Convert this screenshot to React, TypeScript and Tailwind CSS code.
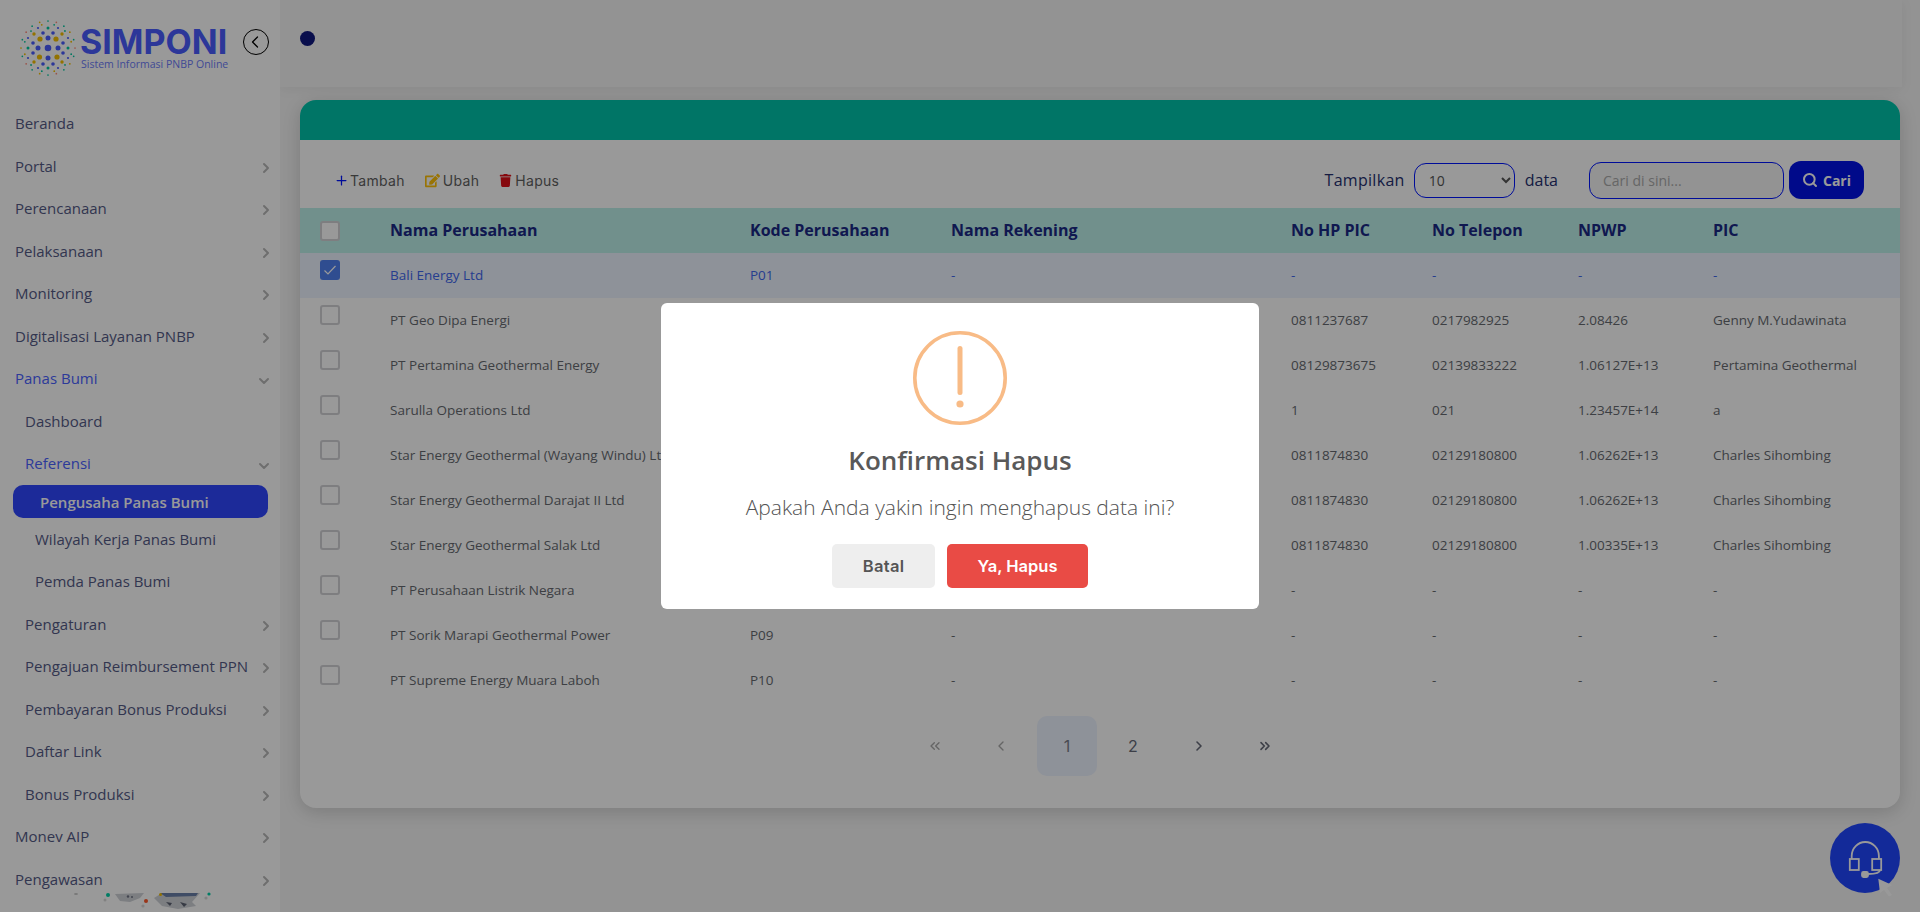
import React from "react";
import { ChevronDown, ChevronLeft, ChevronRight, ChevronsLeft, ChevronsRight, Plus, Search } from "lucide-react";
import { FaEdit, FaTrash } from "react-icons/fa";

type MenuItem = {
  label: string;
  indent?: number;
  arrow?: "right" | "down";
  active?: boolean;
  selected?: boolean;
};

const menu: MenuItem[] = [
  { label: "Beranda" },
  { label: "Portal", arrow: "right" },
  { label: "Perencanaan", arrow: "right" },
  { label: "Pelaksanaan", arrow: "right" },
  { label: "Monitoring", arrow: "right" },
  { label: "Digitalisasi Layanan PNBP", arrow: "right" },
  { label: "Panas Bumi", arrow: "down", active: true },
  { label: "Dashboard", indent: 1 },
  { label: "Referensi", indent: 1, arrow: "down", active: true },
  { label: "Pengusaha Panas Bumi", indent: 2, selected: true },
  { label: "Wilayah Kerja Panas Bumi", indent: 2 },
  { label: "Pemda Panas Bumi", indent: 2 },
  { label: "Pengaturan", indent: 1, arrow: "right" },
  { label: "Pengajuan Reimbursement PPN", indent: 1, arrow: "right" },
  { label: "Pembayaran Bonus Produksi", indent: 1, arrow: "right" },
  { label: "Daftar Link", indent: 1, arrow: "right" },
  { label: "Bonus Produksi", indent: 1, arrow: "right" },
  { label: "Monev AIP", arrow: "right" },
  { label: "Pengawasan", arrow: "right" },
];

const rows = [
  ["Bali Energy Ltd", "P01", "-", "-", "-", "-", "-"],
  ["PT Geo Dipa Energi", "P02", "-", "0811237687", "0217982925", "2.08426", "Genny M.Yudawinata"],
  ["PT Pertamina Geothermal Energy", "P03", "-", "08129873675", "02139833222", "1.06127E+13", "Pertamina Geothermal"],
  ["Sarulla Operations Ltd", "P04", "-", "1", "021", "1.23457E+14", "a"],
  ["Star Energy Geothermal (Wayang Windu) Ltd", "P05", "-", "0811874830", "02129180800", "1.06262E+13", "Charles Sihombing"],
  ["Star Energy Geothermal Darajat II Ltd", "P06", "-", "0811874830", "02129180800", "1.06262E+13", "Charles Sihombing"],
  ["Star Energy Geothermal Salak Ltd", "P07", "-", "0811874830", "02129180800", "1.00335E+13", "Charles Sihombing"],
  ["PT Perusahaan Listrik Negara", "P08", "-", "-", "-", "-", "-"],
  ["PT Sorik Marapi Geothermal Power", "P09", "-", "-", "-", "-", "-"],
  ["PT Supreme Energy Muara Laboh", "P10", "-", "-", "-", "-", "-"],
];

const headers = ["Nama Perusahaan", "Kode Perusahaan", "Nama Rekening", "No HP PIC", "No Telepon", "NPWP", "PIC"];

const gridCols = "grid grid-cols-[90px_360px_201px_340px_141px_146px_135px_187px]";

const ringDots = (count: number, radius: number, size: number, colors: string[], offset = 0) =>
  Array.from({ length: count }, (_, i) => {
    const a = (i / count) * Math.PI * 2 + offset;
    return (
      <circle
        key={`${radius}-${i}`}
        cx={28 + Math.cos(a) * radius}
        cy={28 + Math.sin(a) * radius}
        r={size}
        fill={colors[i % colors.length]}
      />
    );
  });

const BLUE = "#4a5cff";
const GOLD = "#f5c000";
const TEAL = "#00c8a0";
const RED = "#ff8a7a";

const Logo = () => (
  <svg width="56" height="56" viewBox="0 0 56 56" className="shrink-0">
    <circle cx="28" cy="28" r="3.3" fill={BLUE} />
    {[[0, -10], [-10, 0], [10, 0], [0, 10]].map(([x, y]) => (
      <circle key={`a${x}${y}`} cx={28 + x} cy={28 + y} r="2.5" fill={BLUE} />
    ))}
    {[[-8, -9], [8, -9], [-8.5, 9], [9, 9]].map(([x, y]) => (
      <circle key={`g${x}${y}`} cx={28 + x} cy={28 + y} r="2.6" fill={GOLD} />
    ))}
    {[[-5, -15], [5, -15], [-15, -5], [15, -5], [-15, 5], [15, 5], [-5, 16], [5, 16]].map(([x, y]) => (
      <circle key={`b${x}${y}`} cx={28 + x} cy={28 + y} r="1.8" fill={BLUE} />
    ))}
    {[[-14, -14], [14, -14], [-14, 14], [14, 14]].map(([x, y]) => (
      <circle key={`h${x}${y}`} cx={28 + x} cy={28 + y} r="1.7" fill={GOLD} />
    ))}
    {[[0, -20], [-20, 0], [20, 0], [0, 20]].map(([x, y]) => (
      <circle key={`t${x}${y}`} cx={28 + x} cy={28 + y} r="1.5" fill={TEAL} />
    ))}
    {[[-10, -20], [10, -20], [-20, -10], [20, -10], [-20, 10], [20, 10], [-10, 20], [10, 20]].map(([x, y]) => (
      <circle key={`c${x}${y}`} cx={28 + x} cy={28 + y} r="1.1" fill={BLUE} />
    ))}
    {ringDots(12, 24, 0.9, [TEAL, TEAL, GOLD], 0.26)}
    {ringDots(20, 27, 0.85, [RED, TEAL, GOLD, TEAL], 0)}
  </svg>
);

const BottomArt = () => (
  <svg width="180" height="32" viewBox="0 0 180 32" className="absolute left-[50px] bottom-0">
    <ellipse cx="26" cy="14" rx="2" ry="1" fill="#c8c8c8" />
    <circle cx="58" cy="15" r="2" fill="#00d0a8" />
    <circle cx="55" cy="20" r="1.5" fill="#d8d8d8" />
    <path d="M65 14 L94 13 L90 18 L80 22 L70 21 Z" fill="#cfd2d8" />
    <circle cx="78" cy="16.5" r="1.2" fill="#6f7484" />
    <circle cx="82" cy="17" r="1" fill="#6f7484" />
    <circle cx="96" cy="21" r="2" fill="#ff5a2c" />
    <circle cx="93" cy="26" r="1.6" fill="#d8d8d8" />
    <path d="M104 18 L112 13 L150 13 L142 22 L146 26 L128 29 L112 26 Z" fill="#cfd2d8" />
    <path d="M110 13 L148 13 L146 16 L116 17 Z" fill="#6a7fa8" />
    <circle cx="110.5" cy="14.5" r="1.5" fill="#f5c000" />
    <path d="M116 22 L122 23 L120 26 Z M130 22 L137 24 L134 27 Z" fill="#5c6272" />
    <circle cx="156" cy="18" r="1.6" fill="#d8d8d8" />
    <circle cx="159" cy="14" r="1.6" fill="#00d0a8" />
  </svg>
);

const Sidebar = () => (
  <aside className="relative w-[280px] shrink-0 h-full bg-white overflow-hidden">
    <div className="h-[102px] flex items-start pt-5 pl-5">
      <Logo />
      <div className="ml-[4px] w-[150px] pt-[4px]">
        <div className="font-['Inter',sans-serif] font-bold text-[34px] leading-[36px] text-[#4a5cff] whitespace-nowrap">
          SIMPONI
        </div>
        <div className="-mt-[3px] ml-[1px] font-['Open_Sans',sans-serif] text-[10.5px] leading-[14px] text-[#6c7cf8] whitespace-nowrap">
          Sistem Informasi PNBP Online
        </div>
      </div>
      <button className="ml-[13px] mt-[9px] size-[26px] rounded-full border-[1.5px] border-black flex items-center justify-center">
        <ChevronLeft size={20} strokeWidth={1.5} className="text-black -ml-[2px]" />
      </button>
    </div>
    <nav className="font-['Open_Sans',sans-serif] text-[15px]">
      {menu.map((m) =>
        m.selected ? (
          <div key={m.label} className="h-[33px] ml-[13px] mr-3 rounded-[10px] bg-[#2f46ff] flex items-center pl-[27px] pt-[2px] text-white font-semibold">
            {m.label}
          </div>
        ) : (
          <div
            key={m.label}
            className={`h-[42.5px] flex items-center justify-between pr-[6px] ${
              m.indent === 2 ? "pl-[35px]" : m.indent === 1 ? "pl-[25px]" : "pl-[15px]"
            } ${m.active ? "text-[#4a62ff]" : "text-[#545a86]"}`}
          >
            <span className="whitespace-nowrap">{m.label}</span>
            {m.arrow === "right" && <ChevronRight size={16} strokeWidth={3} className="text-[#b8b8b8] mt-[4px]" />}
            {m.arrow === "down" && <ChevronDown size={16} strokeWidth={3} className="text-[#b8b8b8] mt-[6px] mr-[2px]" />}
          </div>
        )
      )}
    </nav>
    <BottomArt />
  </aside>
);

const Toolbar = () => (
  <div className="h-[68px] flex items-center justify-between pl-[34px] pr-[36px] pt-3">
    <div className="flex items-center font-['Inter',sans-serif] text-[14px] tracking-[0.3px] text-[#5f5f5f]">
      <Plus size={15} strokeWidth={2} className="text-[#0015ff] mr-[1px]" />
      <span>Tambah</span>
      <FaEdit size={15} className="text-[#ffc107] ml-5 mr-[3px]" />
      <span>Ubah</span>
      <FaTrash size={13} className="text-[#e01018] ml-5 mr-[3px]" />
      <span>Hapus</span>
    </div>
    <div className="flex items-center font-['Open_Sans',sans-serif]">
      <span className="text-[16px] font-medium tracking-[0.3px] text-[#25306f]">Tampilkan</span>
      <select className="ml-[9px] w-[101px] h-[35px] pl-[10px] pr-2 text-[14px] text-[#555] rounded-xl border border-[#0015ff] bg-transparent">
        <option>10</option>
        <option>25</option>
        <option>50</option>
      </select>
      <span className="ml-[10px] text-[16px] font-medium text-[#25306f]">data</span>
      <input
        placeholder="Cari di sini..."
        className="ml-[31px] w-[195px] h-[37px] px-[13px] text-[14px] rounded-xl border border-[#0015ff] bg-[#f5f5f5] placeholder:text-[#aaaaaa] outline-none"
      />
      <button className="ml-[5px] w-[75px] h-[38px] rounded-xl bg-[#0012e6] text-white text-[14px] font-bold flex items-center justify-center gap-[5px]">
        <Search size={16} strokeWidth={3} />
        Cari
      </button>
    </div>
  </div>
);

const Checkbox = ({ checked }: { checked?: boolean }) =>
  checked ? (
    <div className="size-5 rounded-[3px] bg-[#4f80f0] flex items-center justify-center">
      <svg width="14" height="14" viewBox="0 0 14 14" fill="none">
        <path d="M1.5 7.5 L5 11 L12.5 3" stroke="#fff" strokeWidth="1.2" />
      </svg>
    </div>
  ) : (
    <div className="size-5 rounded-[3px] border-2 border-[#d2d2d6] bg-white" />
  );

const DataTable = () => (
  <div className="font-['Open_Sans',sans-serif]">
    <div className={`${gridCols} h-[45px] bg-[#bcf0e9] items-center`}>
      <div className="pl-5">
        <Checkbox />
      </div>
      {headers.map((h) => (
        <div key={h} className="text-[16px] font-bold text-[#1a2885] whitespace-nowrap -mt-[2px]">
          {h}
        </div>
      ))}
    </div>
    {rows.map((r, idx) => (
      <div key={r[0]} className={`${gridCols} h-[45px] items-center text-[13.5px] ${idx === 0 ? "bg-[#edf3ff] text-[#4068ee]" : "text-[#666a70]"}`}>
        <div className="pl-5 self-start pt-[7px]">
          <Checkbox checked={idx === 0} />
        </div>
        {r.map((c, i) => (
          <div key={i} className="whitespace-nowrap -mt-[1px]">
            {c}
          </div>
        ))}
      </div>
    ))}
  </div>
);

const Pagination = () => (
  <div className="mt-[13px] flex justify-center gap-[6px] font-['Inter',sans-serif] text-[16px]">
    <div className="size-[60px] flex items-center justify-center text-[#a8a8a8]">
      <ChevronsLeft size={16} strokeWidth={2} />
    </div>
    <div className="size-[60px] flex items-center justify-center text-[#a8a8a8]">
      <ChevronLeft size={16} strokeWidth={2} />
    </div>
    <div className="size-[60px] rounded-[10px] bg-[#edf3ff] flex items-center justify-center text-[#7a7e8c]">1</div>
    <div className="size-[60px] flex items-center justify-center text-[#666a78]">2</div>
    <div className="size-[60px] flex items-center justify-center text-[#666a78]">
      <ChevronRight size={16} strokeWidth={2.4} />
    </div>
    <div className="size-[60px] flex items-center justify-center text-[#666a78]">
      <ChevronsRight size={16} strokeWidth={2.4} />
    </div>
  </div>
);

const HelpButton = () => (
  <button className="absolute left-[1830px] top-[823px] size-[70px] rounded-full bg-[#2046ff]">
    <svg width="70" height="70" viewBox="0 0 70 70" fill="none" className="overflow-visible" stroke="#fff" strokeWidth="1.8">
      <path d="M21.7 36 V33 a13.6 14 0 0 1 27.2 0 V36" />
      <rect x="19.8" y="36" width="9" height="11" />
      <rect x="42.2" y="36" width="9" height="11" />
      <path d="M50 47 C50 50 44 51 38 51" />
      <rect x="32" y="49" width="6" height="5" rx="1.5" fill="#fff" />
      <path d="M48.3 55.7 L62 62 L57 65 L62 72 L59 73.5 L54 67 L50 70 Z" fill="#fff" stroke="none" />
    </svg>
  </button>
);

const ConfirmModal = () => (
  <div className="absolute inset-0 bg-black/40 flex items-center justify-center">
    <div className="w-[598px] h-[306px] rounded-[6px] bg-white flex flex-col items-center pt-7 font-['Open_Sans',sans-serif]">
      <svg width="94" height="94" viewBox="0 0 94 94" fill="none" stroke="#f8bb86">
        <circle cx="47" cy="47" r="45.2" strokeWidth="3.6" />
        <path d="M47 17.5 V61.5" strokeWidth="5" strokeLinecap="round" />
        <circle cx="47" cy="73" r="3.6" fill="#f8bb86" stroke="none" />
      </svg>
      <h2 className="mt-[17px] text-[26px] leading-[36px] font-semibold text-[#595959]">Konfirmasi Hapus</h2>
      <p className="mt-[14px] text-[21px] leading-[30px] font-light text-[#545454]">Apakah Anda yakin ingin menghapus data ini?</p>
      <div className="mt-[22px] flex gap-3 font-['Inter',sans-serif] text-[16.5px] font-semibold">
        <button className="w-[103px] h-[44px] rounded-[5px] bg-[#eeeeee] text-[#555555] tracking-[0.3px]">Batal</button>
        <button className="w-[141px] h-[44px] rounded-[5px] bg-[#e94b45] text-white">Ya, Hapus</button>
      </div>
    </div>
  </div>
);

export default function App() {
  return (
    <div className="relative w-full h-screen overflow-hidden flex bg-[#f5f5f5]">
      <Sidebar />
      <main className="flex-1 min-w-0 flex flex-col">
        <header className="h-[87px] mr-[18px] flex items-start pl-5 pt-[31px] shadow-[0_2px_12px_rgba(0,0,0,0.06)]">
          <span className="size-[15px] rounded-full bg-[#10187f]" />
        </header>
        <section className="mt-[13px] mx-5 h-[708px] rounded-2xl bg-white shadow-[0_4px_18px_rgba(0,0,0,0.16)] overflow-hidden">
          <div className="h-10 bg-[#00c3aa]" />
          <Toolbar />
          <DataTable />
          <Pagination />
        </section>
      </main>
      <HelpButton />
      <ConfirmModal />
    </div>
  );
}
